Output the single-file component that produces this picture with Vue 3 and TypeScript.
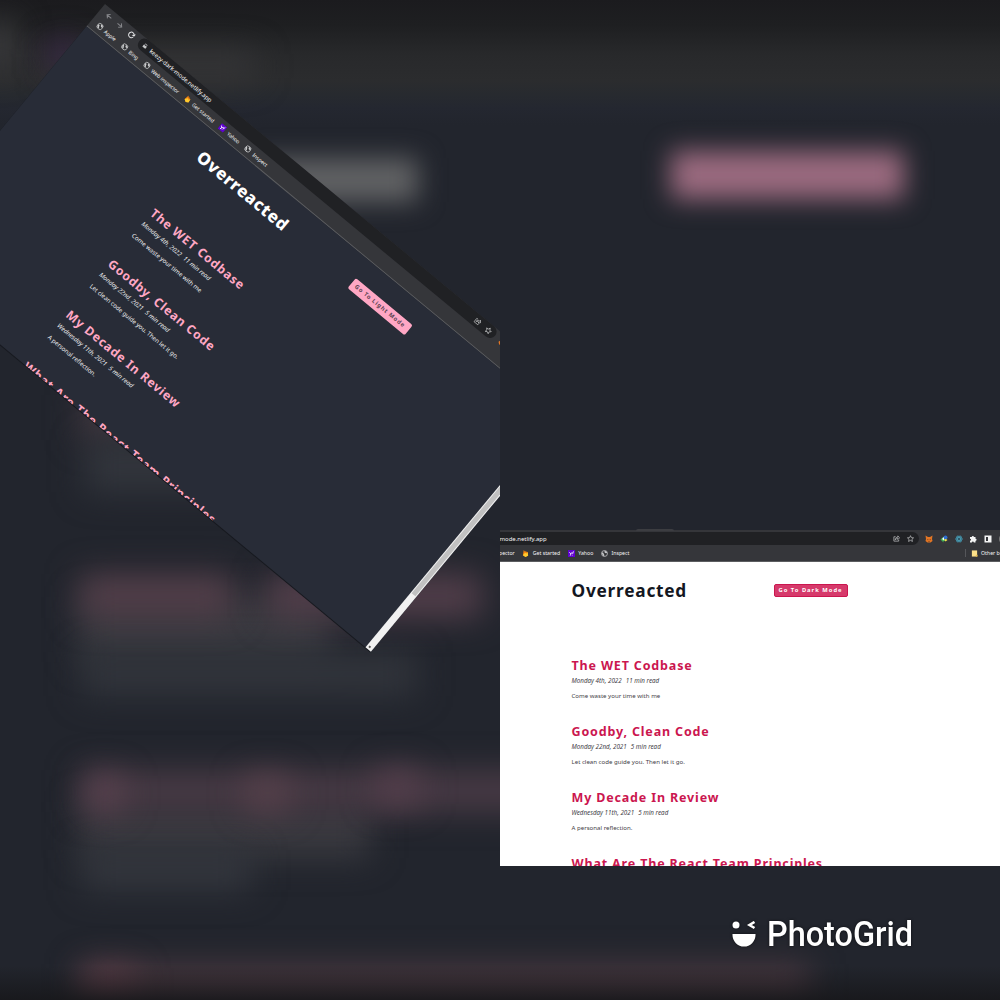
<script setup lang="ts">
interface Post {
  title: string
  date: string
  read: string
  text: string
}

interface Bookmark {
  label: string
  icon: 'globe' | 'flame' | 'yahoo'
}

interface Shot {
  theme: 'dark' | 'light'
  button: string
}

const shots: Shot[] = [
  { theme: 'dark', button: 'Go To Light Mode' },
  { theme: 'light', button: 'Go To Dark Mode' },
]

const bookmarks: Bookmark[] = [
  { label: 'Apple', icon: 'globe' },
  { label: 'Bing', icon: 'globe' },
  { label: 'Web inspector', icon: 'globe' },
  { label: 'Get started', icon: 'flame' },
  { label: 'Yahoo', icon: 'yahoo' },
  { label: 'Inspect', icon: 'globe' },
]

const posts: Post[] = [
  { title: 'The WET Codbase', date: 'Monday 4th, 2022', read: '11 min read', text: 'Come waste your time with me' },
  { title: 'Goodby, Clean Code', date: 'Monday 22nd, 2021', read: '5 min read', text: 'Let clean code guide you. Then let it go.' },
  { title: 'My Decade In Review', date: 'Wednesday 11th, 2021', read: '5 min read', text: 'A personal reflection.' },
  { title: 'What Are The React Team Principles', date: '', read: '', text: '' },
]

const glows = ['bar', 'tabs', 'violet', 'heading', 'button', 't0', 'd0', 'd1', 'p1', 't1a', 't1b', 'd2', 'p2', 't2', 't2a', 't2b', 't2c', 't3', 't3a']
</script>

<template>
  <main class="collage">
    <div class="backdrop">
      <i v-for="g in glows" :key="g" class="glow" :class="'glow-' + g"></i>
      <div class="floor"></div>
    </div>

    <section v-for="shot in shots" :key="shot.theme" class="cell" :class="shot.theme">
      <div class="window">
        <header class="chrome">
          <div class="tabedge"><i></i></div>
          <div class="toolbar">
            <svg class="nav dim" viewBox="0 0 16 16"><path d="M14 8H3M8 3L3 8l5 5" /></svg>
            <svg class="nav dim" viewBox="0 0 16 16"><path d="M2 8h11M8 3l5 5-5 5" /></svg>
            <svg class="nav" viewBox="0 0 16 16"><path d="M12.5 4.5A5.6 5.6 0 1 0 13.6 9" /><path class="solid" d="M14.5 1.5v6h-6z" /></svg>
            <div class="address">
              <svg class="lock" viewBox="0 0 16 16"><path d="M4.5 7V5a3.5 3.5 0 0 1 7 0v2" /><rect x="2.5" y="7" width="11" height="8" rx="1" /></svg>
              <span>keezy-dark-mode.netlify.app</span>
              <svg class="act share" viewBox="0 0 16 16"><path d="M6 4H2v10h11v-3M5 11c0-4 3-6 6-6V2l4 4.500-4 4V8c-3 0-5 1-6 3z" /></svg>
              <svg class="act" viewBox="0 0 16 16"><path d="M8 1.500l2 4.500 5 .5-3.700 3.300 1.100 4.900L8 12.200l-4.400 2.500 1.100-4.900L1 6.500 6 6z" /></svg>
            </div>
            <div class="extensions">
              <svg viewBox="0 0 16 16"><path fill="#e27625" d="M1 1l5 3h4l5-3-1 7 1 4-4 3H5l-4-3 1-4z" /><path fill="#763e1a" d="M4 8l3 1-1 2zM12 8L9 9l1 2zM6 13h4v1H6z" /></svg>
              <svg viewBox="0 0 16 16"><path fill="#3faf55" d="M1 9l6-6v4h4v5H7v3z" /><circle cx="11" cy="5" r="4" fill="#2f6fd0" /><path fill="#f4df4a" d="M8 9l4-1 3 2-4 3z" /><path fill="#fff" d="M4 8l4-4v7z" /></svg>
              <svg viewBox="0 0 16 16"><circle cx="8" cy="8" r="6.500" fill="#2b5363" /><g fill="none" stroke="#4fa5bd" stroke-width="1.300"><ellipse cx="8" cy="8" rx="7" ry="3" /><ellipse cx="8" cy="8" rx="7" ry="3" transform="rotate(60 8 8)" /><ellipse cx="8" cy="8" rx="7" ry="3" transform="rotate(120 8 8)" /></g></svg>
              <svg viewBox="0 0 16 16"><path fill="#f4f4f4" d="M2 4h3.500a2.200 2.200 0 1 1 4.400 0H13v3.500a2.200 2.200 0 1 1 0 4.400V15H9.700a2 2 0 1 0-4 0H2v-3.500a2 2 0 1 0 0-4z" /></svg>
              <svg viewBox="0 0 16 16"><path fill="#f4f4f4" fill-rule="evenodd" d="M1 1h14v14H1zM4 4v8h4V4z" /></svg>
              <svg viewBox="0 0 16 16"><circle cx="8" cy="8" r="7.500" fill="#111" stroke="#ddd" /><path stroke="#ddd" stroke-width="1.500" d="M3 5h10M3 10h10" /></svg>
            </div>
          </div>
          <div class="bookmarks">
            <div v-for="b in bookmarks" :key="b.label" class="bookmark">
              <svg v-if="b.icon === 'globe'" viewBox="0 0 16 16"><circle cx="8" cy="8" r="6.800" fill="#2f3033" stroke="#c9cacc" stroke-width="1.800" /><path fill="#c9cacc" d="M2 6c2-1 4 0 4 2s2 2 2 4-2 2-3 1-3-4-3-7zM8 2c3 0 5 1 6 4-1 2-3 2-4 1S7 5 8 2z" /></svg>
              <svg v-else-if="b.icon === 'flame'" viewBox="0 0 16 16"><path fill="#f5820d" d="M2 12L4 0l3 4 2-2 2 3 2-1 1 8-6 4z" /><path fill="#fdca2f" d="M2 12l5-6 3 2 3-3 1 8-6 3z" /></svg>
              <svg v-else viewBox="0 0 16 16"><rect width="16" height="16" fill="#5f01d1" /><path d="M3 5l3.500 4L5 13M9.500 5l-3 4M12.500 3l-2 6M9.800 11v1.500" fill="none" stroke="#fff" stroke-width="1.900" /></svg>
              <span>{{ b.label }}</span>
            </div>
            <div class="other">
              <svg viewBox="0 0 16 16"><path fill="#fbe08a" d="M2 1h12v14H2z" /><path fill="#e9bd4c" d="M11 11h4v4h-4z" /></svg>
              <span>Other bookmarks</span>
            </div>
          </div>
        </header>
        <div class="body">
          <article class="page">
            <div class="head">
              <h1>Overreacted</h1>
              <button type="button">{{ shot.button }}</button>
            </div>
            <div v-for="post in posts" :key="post.title" class="post">
              <h2>{{ post.title }}</h2>
              <p class="meta"><span>{{ post.date }}</span><span>{{ post.read }}</span></p>
              <p class="text">{{ post.text }}</p>
            </div>
          </article>
          <div class="scrollbar"><i class="thumb"></i><b></b></div>
        </div>
      </div>
    </section>

    <footer class="brand">
      <svg viewBox="0 0 24 26">
        <circle cx="4" cy="4" r="3.500" />
        <path class="wink" d="M22.500 1l-5 3 5 3" />
        <path d="M.5 13h23v1a11.500 11.500 0 0 1-23 0z" />
      </svg>
      <span>PhotoGrid</span>
    </footer>
  </main>
</template>

<style>
body {
  margin: 0;
  background: #22252d;
}
</style>

<style scoped>
.collage {
  position: relative;
  width: 1000px;
  height: 1000px;
  overflow: hidden;
  background: #22252d;
  font-family: "Noto Sans", "Open Sans", sans-serif;
}

.backdrop {
  position: absolute;
  inset: 0;
  overflow: hidden;
  background: linear-gradient(#1b1b1e 0, #1e1f21 25px, #28292b 55px, #2b2c2e 80px, #272a2f 95px, #242730 108px, #22252d 125px);
}
.glow {
  position: absolute;
  filter: blur(16px);
}
.floor {
  position: absolute;
  left: 0;
  right: 0;
  bottom: 0;
  height: 34px;
  background: linear-gradient(transparent, #17171add);
}
.glow-bar { left: -20px; top: 20px; width: 36px; height: 50px; background: #3a3a3c; }
.glow-tabs { left: 50px; top: 52px; width: 205px; height: 28px; background: #363638; }
.glow-violet { left: 48px; top: 42px; width: 30px; height: 22px; background: #38204c; }
.glow-heading { left: 250px; top: 158px; width: 168px; height: 44px; background: #616264; filter: blur(13px); }
.glow-button { left: 671px; top: 151px; width: 233px; height: 48px; background: #9c6b80; filter: blur(13px); }
.glow-t0 { left: 80px; top: 395px; width: 200px; height: 45px; background: #423840; }
.glow-d0 { left: 85px; top: 440px; width: 240px; height: 52px; background: #32353c; }
.glow-t1a { left: 80px; top: 574px; width: 154px; height: 44px; background: #523e49; }
.glow-t1b { left: 266px; top: 574px; width: 216px; height: 44px; background: #523e4a; }
.glow-d1 { left: 80px; top: 597px; width: 250px; height: 65px; background: #393a40; }
.glow-p1 { left: 82px; top: 652px; width: 335px; height: 44px; background: #31343b; }
.glow-t2 { left: 80px; top: 770px; width: 500px; height: 42px; background: #483a45; }
.glow-t2a { left: 88px; top: 776px; width: 34px; height: 34px; background: #5c4350; }
.glow-t2b { left: 245px; top: 776px; width: 45px; height: 34px; background: #57414b; }
.glow-t2c { left: 375px; top: 770px; width: 45px; height: 34px; background: #553f4c; }
.glow-d2 { left: 80px; top: 802px; width: 290px; height: 56px; background: #39393f; }
.glow-p2 { left: 82px; top: 850px; width: 170px; height: 40px; background: #33363d; }
.glow-t3 { left: 80px; top: 964px; width: 730px; height: 50px; background: #47373f; }
.glow-t3a { left: 85px; top: 968px; width: 50px; height: 46px; background: #573b45; }

.cell {
  position: absolute;
  overflow: hidden;
}
.cell.dark {
  left: 0;
  top: 0;
  width: 500px;
  height: 700px;
  --bg: #282c37;
  --fg: #fff;
  --accent: #ffa7c4;
  --ink: #5c4352;
  --muted: #eeeff1;
}
.cell.light {
  left: 500px;
  top: 529px;
  width: 500px;
  height: 337px;
  --bg: #fff;
  --fg: #14171f;
  --accent: #cb164f;
  --ink: #fff;
  --muted: #3f4046;
}

.window {
  position: absolute;
  display: flex;
  flex-direction: column;
  width: 618px;
}
.dark .window {
  left: 105px;
  top: 4px;
  height: 329px;
  transform-origin: 0 0;
  transform: rotate(39.65deg);
}
.light .window {
  left: -97px;
  top: 0;
  height: 337px;
  width: 626px;
}

.chrome {
  flex: none;
  box-sizing: border-box;
  background: #35363a;
  border-bottom: 1px solid #5c5d60;
  color: #f4f4f5;
  font-size: 5.2px;
  line-height: 8px;
  white-space: nowrap;
}
.dark .chrome { height: 28.5px; }
.light .chrome { height: 33px; }
.tabedge { display: none; }
.light .tabedge {
  display: block;
  height: 3px;
  background: linear-gradient(#22252d 1px, #35363a 1px);
}
.light .tabedge i {
  display: block;
  width: 38px;
  height: 2px;
  margin-left: 233px;
  border-radius: 2px 2px 0 0;
  background: #3c3d41;
}
.toolbar {
  display: flex;
  align-items: center;
  height: 13px;
}
.nav {
  flex: none;
  width: 8px;
  height: 8px;
  margin-left: 6.5px;
  fill: none;
  stroke: #e4e5e7;
  stroke-width: 2;
}
.nav.dim { stroke: #85868a; }
.nav .solid { fill: #e4e5e7; stroke: none; }
.address {
  display: flex;
  align-items: center;
  box-sizing: border-box;
  flex: none;
  width: 466px;
  height: 13px;
  margin-left: 6.5px;
  padding: 0 5px 0 5px;
  border-radius: 7px;
  background: #202124;
  color: #f4f4f5;
}
.dark .address { width: 462px; }
.address span { flex: 1; font-size: 5.95px; }
.lock {
  width: 5.5px;
  height: 5.5px;
  margin-right: 4px;
  fill: #c4c5c7;
}
.lock path { fill: none; stroke: #c4c5c7; stroke-width: 2; }
.act {
  width: 7px;
  height: 7px;
  margin-left: 7.5px;
  fill: none;
  stroke: #c4c5c7;
  stroke-width: 1.6;
}
.extensions {
  display: flex;
  gap: 6.8px;
  margin-left: 6px;
}
.extensions svg {
  flex: none;
  width: 8px;
  height: 8px;
}

.bookmarks {
  display: flex;
  align-items: center;
  height: 15px;
  padding-left: 6.5px;
}
.light .bookmarks { height: 16px; padding-left: 5px; }
.bookmark {
  display: flex;
  align-items: center;
  margin-right: 7.6px;
}
.bookmark svg {
  flex: none;
  width: 7px;
  height: 7px;
  margin-right: 3.500px;
}
.other {
  display: flex;
  align-items: center;
  margin-left: auto;
  padding-left: 5px;
  border-left: 1px solid #55565a;
}
.light .other { margin-right: 5px; }
.dark .other { display: none; }
.other svg { width: 7px; height: 7px; margin-right: 3.500px; }

.body {
  display: flex;
  flex: 1;
  min-height: 0;
  background: var(--bg);
  box-shadow: 0 1px 0 #17191f;
}
.page {
  flex: 1;
  overflow: hidden;
  padding-left: 168.5px;
}
.scrollbar {
  display: flex;
  flex-direction: column;
  flex: none;
  width: 7.3px;
  background: #f1f1f1;
}
.thumb {
  width: 5.5px;
  height: 222px;
  margin: 7px auto 0;
  background: #c1c1c1;
}
.scrollbar b {
  width: 2px;
  height: 2px;
  margin: auto auto 2px;
  background: #505050;
}
.head {
  display: flex;
  align-items: center;
  height: 57px;
}
h1 {
  flex: none;
  width: 199px;
  margin: 0;
  color: var(--fg);
  font-size: 17.3px;
  line-height: 24px;
  font-weight: 700;
  letter-spacing: 0.75px;
}
.light h1 { width: 202px; padding-top: 1.5px; }
.dark h1 { padding-bottom: 2px; font-size: 16.9px; letter-spacing: 0.65px; font-weight: 800; }
button {
  box-sizing: border-box;
  width: 74px;
  height: 13px;
  padding: 0;
  border: 0;
  border-radius: 2px;
  background: var(--accent);
  color: var(--ink);
  font: 700 5.8px/13px "Noto Sans", sans-serif;
  letter-spacing: 0.85px;
  white-space: nowrap;
}
.light button { border: 1px solid #cb164f; background: #d63a6b; line-height: 11px; letter-spacing: 1px; }
.post { height: 66.1px; }
.head + .post { margin-top: 38px; }
.dark .head + .post { margin-top: 35.8px; }
h2 {
  margin: 0;
  color: var(--accent);
  font-size: 12.5px;
  line-height: 18px;
  font-weight: 700;
  letter-spacing: 0.84px;
  white-space: nowrap;
}
.dark h2 { font-size: 12.3px; letter-spacing: 0.78px; }
p {
  margin: 0;
  color: var(--muted);
  font-size: 6.1px;
  line-height: 9px;
  white-space: nowrap;
}
.meta { padding-top: 1px; font-style: italic; font-size: 6.25px; }
.dark .meta { padding-top: 0.5px; }
.meta span + span { margin-left: 4px; }
.text { margin-top: 6px; }

.brand {
  position: absolute;
  left: 732px;
  top: 914px;
  display: flex;
  align-items: center;
  height: 40px;
  color: #fff;
  fill: #fff;
  font: 500 34.5px/40px Roboto, sans-serif;
  filter: drop-shadow(0 0 1.5px #0009);
}
.brand span {
  transform: scaleX(0.94);
  transform-origin: 0 50%;
}
.brand svg {
  width: 24px;
  height: 26px;
  margin-right: 11px;
}
.brand .wink {
  fill: none;
  stroke: #fff;
  stroke-width: 2.600;
}
</style>
